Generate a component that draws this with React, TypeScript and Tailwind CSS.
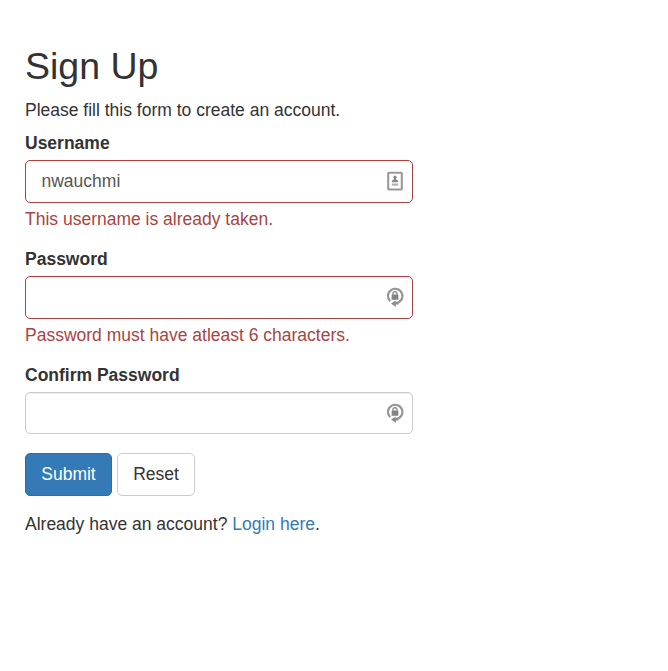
import React from "react";

function ContactIcon() {
  return (
    <svg className="mb-px" width="18" height="20" viewBox="0 0 18 20" fill="none">
      <rect x="2.2" y="1.7" width="13.6" height="16.8" rx=".6" stroke="#9a9a9a" strokeWidth="2.1" />
      <circle cx="9" cy="6.2" r="1.6" fill="#858585" />
      <path d="M8 6.5h2v1.8l2.2 1.5v1.4H5.8V9.8L8 8.3z" fill="#8a8a8a" />
      <path d="M5.8 13.6h6.4" stroke="#b0b0b0" strokeWidth="2.2" />
    </svg>
  );
}

function LockIcon() {
  return (
    <svg className="mb-px" width="18" height="20" viewBox="0 0 18 20" fill="none">
      <path d="M4.2 14.2A7.2 7.2 0 1 1 9.5 16.2" stroke="#969696" strokeWidth="2.2" />
      <path d="M5 16.6L9.6 13.6v2H12.4v2H9.8v2.3z" fill="#8c8c8c" />
      <rect x="5.6" y="7.6" width="6.8" height="5.2" rx=".5" fill="#838383" />
      <path d="M7 8V6.8a2 2 0 0 1 4 0V8" stroke="#909090" strokeWidth="1.4" />
    </svg>
  );
}

type FieldProps = {
  label: string;
  value?: string;
  error?: string;
  icon: React.ReactNode;
};

function Field({ label, value = "", error, icon }: FieldProps) {
  return (
    <div className={error ? "mb-[15px]" : "mb-[19px]"}>
      <div className="mb-1 h-[25px] font-bold">{label}</div>
      <div
        className={`flex items-center justify-between rounded-[5px] border pr-2 pl-[15.5px] text-[#555] shadow-[inset_0_1px_1px_rgba(0,0,0,0.075)] ${error ? "h-[43px] border-[#a94442]" : "h-[42px] border-[#ccc]"}`}
      >
        <span>{value}</span>
        {icon}
      </div>
      {error && <div className="mt-1 h-[25px] text-[#a94442]">{error}</div>}
    </div>
  );
}

export default function App() {
  return (
    <main className="min-h-[671px] bg-white px-[25px] pt-[44px] font-['Liberation_Sans',Arial,sans-serif] text-[17.5px] leading-[25px] text-[#333]">
      <div className="w-[388px]">
        <h1 className="mb-[10px] text-[37.5px] leading-[44px]">Sign Up</h1>
        <p className="mb-2">Please fill this form to create an account.</p>
        <Field label="Username" value="nwauchmi" error="This username is already taken." icon={<ContactIcon />} />
        <Field label="Password" error="Password must have atleast 6 characters." icon={<LockIcon />} />
        <Field label="Confirm Password" icon={<LockIcon />} />
        <div className="flex gap-[5px]">
          <button className="h-[43px] w-[87px] rounded-[5px] border border-[#2e6da4] bg-[#337ab7] text-white">Submit</button>
          <button className="h-[43px] w-[78px] rounded-[5px] border border-[#ccc] bg-white">Reset</button>
        </div>
        <p className="mt-4">
          Already have an account? <a className="text-[#337ab7]">Login here</a>.
        </p>
      </div>
    </main>
  );
}
